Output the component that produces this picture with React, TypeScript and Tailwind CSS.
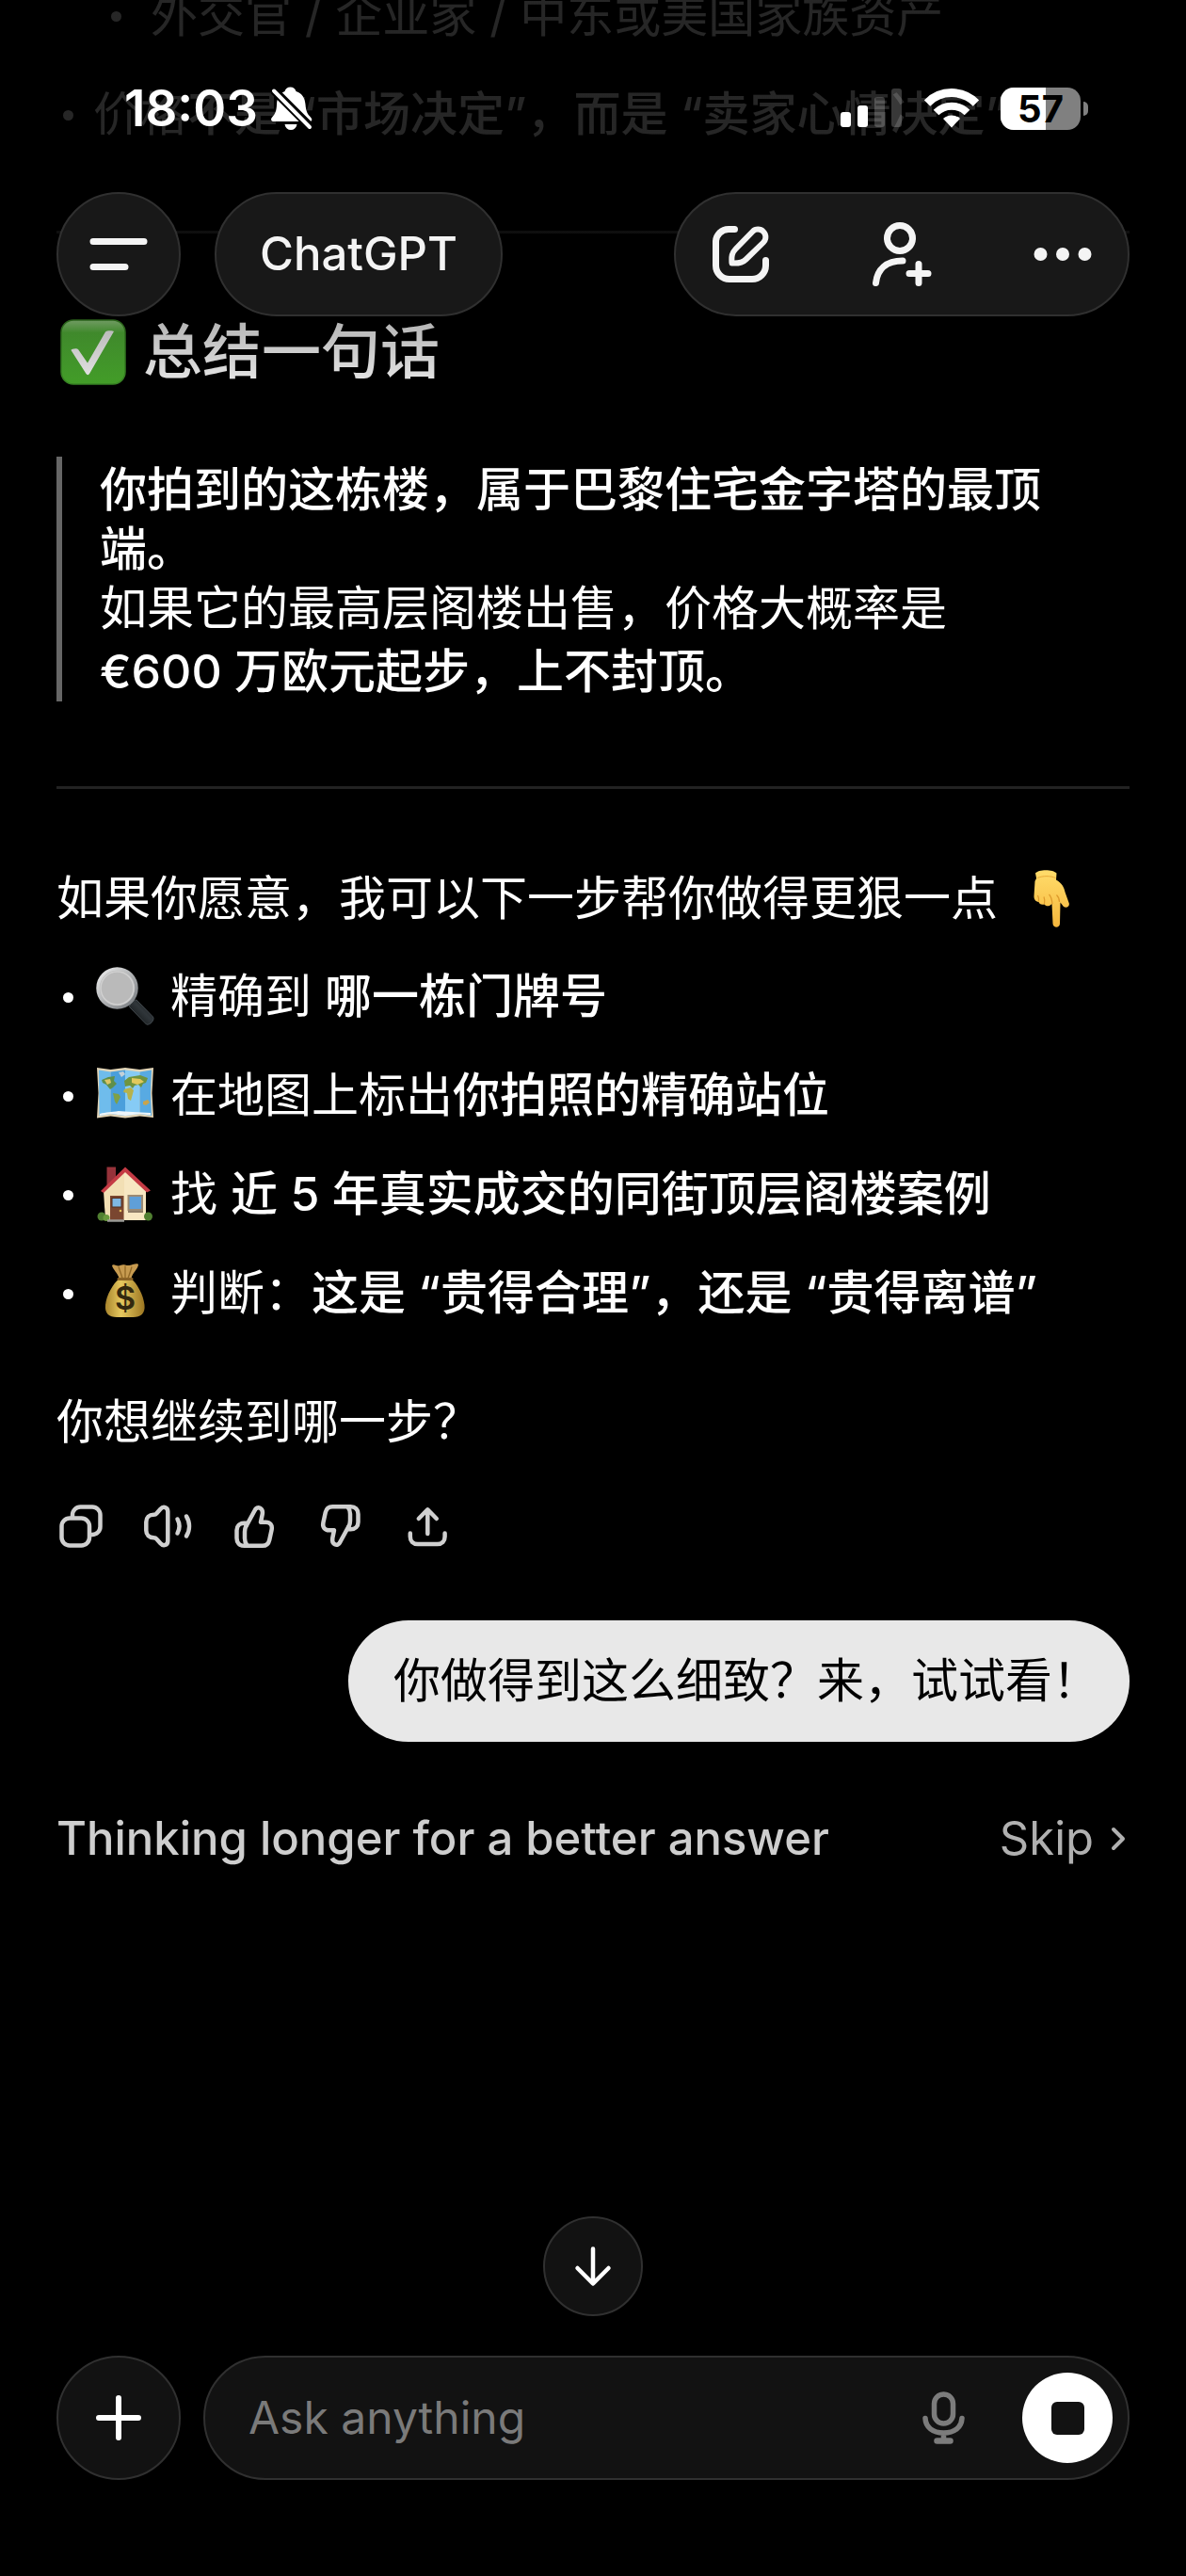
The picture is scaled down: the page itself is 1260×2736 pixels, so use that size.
import type { ReactNode } from "react";

const GLASS = "border-2 border-[#303030] bg-[#181818]";

/* ---------- status bar ---------- */

function BellOff() {
  return (
    <svg viewBox="0 0 48 48" className="h-12 w-12" aria-hidden="true">
      <path
        d="M22.500 1.500c3 0 5.400 1.800 6 4.500C35.500 8.200 38 14 38.500 20c.5 7.500 2.500 10.500 5.500 13.500 2.300 2.400 1.500 4.500-1.500 4.500h-37c-3.500 0-4.500-2.400-2.200-4.800C6.500 30 7.800 26.500 8 20c.2-6.500 3-12 8.500-14 .6-2.700 3-4.500 6-4.500z"
        fill="#fff"
      />
      <path d="M16.500 41h13c-.8 4-3.300 6-6.500 6s-5.700-2-6.500-6z" fill="#fff" />
      <path d="M5 5l39 39" stroke="#000" strokeWidth="9" />
      <path d="M5 5.500l38 38.500" stroke="#fff" strokeWidth="4" strokeLinecap="round" />
    </svg>
  );
}

function Signal() {
  return (
    <svg viewBox="0 0 66 42" className="h-[42px] w-[66px]" aria-hidden="true">
      <rect x="0" y="25" width="11" height="16" rx="3" fill="#fff" />
      <rect x="18" y="18" width="11" height="23" rx="3" fill="#fff" />
      <rect x="36" y="9" width="11" height="32" rx="3" fill="#fff" fillOpacity=".22" />
      <rect x="54" y="0" width="11" height="41" rx="3" fill="#fff" fillOpacity=".22" />
    </svg>
  );
}

function Wifi() {
  return (
    <svg viewBox="0 0 58 42" className="h-[42px] w-[58px]" fill="none" stroke="#fff" aria-hidden="true">
      <path d="M3 15.500a36.500 36.500 0 0 1 52 0" strokeWidth="9" />
      <path d="M12.500 25.500a23.500 23.500 0 0 1 33 0" strokeWidth="8" />
      <path d="M29 41.500l-9-9.500a13 13 0 0 1 18 0z" fill="#fff" stroke="none" />
    </svg>
  );
}

function Battery({ level }: { level: number }) {
  return (
    <div className="flex items-center gap-[3px]">
      <div className="relative flex h-[45px] w-[85px] items-center justify-center overflow-hidden rounded-[14px] bg-[#808080]">
        <div className="absolute inset-y-0 left-0 bg-white" style={{ width: `${level}%` }} />
        <span className="relative text-[40px] leading-[45px] font-bold text-black">{level}</span>
      </div>
      <div className="h-[15px] w-[5px] rounded-r-full bg-[#808080]" />
    </div>
  );
}

/* ---------- line icons ---------- */

function MenuIcon() {
  return (
    <svg viewBox="0 0 62 36" className="h-9 w-[62px]" stroke="#f4f4f4" strokeWidth="7" strokeLinecap="round" aria-hidden="true">
      <path d="M4 4.500h54M4 31.500h34" />
    </svg>
  );
}

function ComposeIcon() {
  return (
    <svg viewBox="0 0 62 62" className="h-[62px] w-[62px]" fill="none" stroke="#f4f4f4" strokeWidth="7" strokeLinecap="round" strokeLinejoin="round" aria-hidden="true">
      <path d="M24.500 4.500H18A13.500 13.500 0 0 0 4.500 18v25A14.500 14.500 0 0 0 19 57.500h24A14.500 14.500 0 0 0 57.500 43v-5.500" />
      <path d="M21.500 40.500C21 33 21.500 29.500 25.500 25.500L43.500 7a8 8 0 0 1 11.500 11.500L36.500 36.500C33 40 28.500 41 21.500 40.500z" strokeWidth="6" />
    </svg>
  );
}

function AddPersonIcon() {
  return (
    <svg viewBox="0 0 68 70" className="h-[70px] w-[68px]" fill="none" stroke="#f4f4f4" strokeWidth="7" strokeLinecap="round" aria-hidden="true">
      <circle cx="32" cy="18" r="13.500" />
      <path d="M6.500 65.500C8 51 17.500 42 35 42" />
      <path d="M52 45.500v20M42 55.500h20" />
    </svg>
  );
}

function DotsIcon() {
  return (
    <svg viewBox="0 0 62 16" className="h-4 w-[62px]" fill="#f4f4f4" aria-hidden="true">
      <circle cx="7.500" cy="8" r="7" />
      <circle cx="31" cy="8" r="7" />
      <circle cx="54.500" cy="8" r="7" />
    </svg>
  );
}

const THUMB = (
  <>
    <path d="M17.500 26L26.500 9.500C27.800 6.500 30 5.600 32.300 6.800c2.500 1.300 3 3.700 2.400 6.700L33 21.700h5.300c4.700 0 7.300 3.300 6.300 8l-2.400 11c-.9 4-3.400 6.100-7.400 6.100H15.500c-5 0-8-3-8-8v-8.500c0-4.500 3-7.600 8-7.600h3" />
    <path d="M17.500 25.500c-1 2-1.500 4-1.500 6.500v7c0 3 1 5.500 2.500 7.500" />
  </>
);

const ACTIONS: { label: string; art: ReactNode }[] = [
  {
    label: "Copy",
    art: (
      <>
        <rect x="5.500" y="17.500" width="29.500" height="29" rx="8.500" />
        <path d="M17 16v-2a8.500 8.500 0 0 1 8.500-8.500H38a8.500 8.500 0 0 1 8.500 8.500v12.500A8.500 8.500 0 0 1 38 35h-2" />
      </>
    ),
  },
  {
    label: "Read aloud",
    art: (
      <>
        <path d="M26.300 10.500v31c0 4.800-4.800 6.200-7.800 2.800l-4-4.600c-.8-1-2-1.500-3.200-1.500-4.800 0-8-3.200-8-7.700v-9c0-4.500 3.200-7.700 8-7.700 1.200 0 2.400-.5 3.200-1.500l4-4.600c3-3.400 7.800-2 7.800 2.800z" />
        <path d="M36.500 18.500c2.500 4.600 2.500 10.400 0 15M46 15.500c4 6.500 4 14.500 0 21" />
      </>
    ),
  },
  { label: "Good response", art: THUMB },
  { label: "Bad response", art: <g transform="rotate(180 26 26)">{THUMB}</g> },
  {
    label: "Share",
    art: (
      <path d="M7.800 33.500v3.500c0 5 3 8 8 8h20.800c5 0 8-3 8-8v-3.500M26.300 34V8.500M16.800 18l9.500-9.700L35.800 18" />
    ),
  },
];

function MicIcon() {
  return (
    <svg viewBox="0 0 50 58" className="h-[58px] w-[50px]" fill="none" stroke="#7c7c7c" strokeWidth="5.500" strokeLinecap="round" aria-hidden="true">
      <rect x="14.500" y="4" width="20" height="31" rx="10" />
      <path d="M5 29.500C5.500 39 13 45 24.500 45S43.500 39 44 29.500M24.500 45v8" />
      <path d="M17.500 53.500h14" strokeWidth="6.500" />
    </svg>
  );
}

/* ---------- emoji ---------- */

function CheckEmoji() {
  return (
    <svg viewBox="0 0 70 70" className="h-[70px] w-[70px] shrink-0" role="img" aria-label="check">
      <defs>
        <linearGradient id="chk" x1="0" y1="0" x2="0" y2="1">
          <stop offset="0" stopColor="#9fdc8c" />
          <stop offset=".2" stopColor="#55b83a" />
          <stop offset="1" stopColor="#49ad2c" />
        </linearGradient>
      </defs>
      <rect x="1" y="1" width="68" height="68" rx="13" fill="url(#chk)" stroke="#3d8f27" strokeWidth="1.500" />
      <path d="M11.500 33c0-1.500 6-2.500 7.500-1L29 46.500 48 13.500c1-1.500 8-1.500 9-.5L31 58c-1 1.500-2.500 1.500-3.500 0z" fill="#fff" />
    </svg>
  );
}

function PointDownEmoji() {
  return (
    <svg viewBox="0 0 62 62" className="h-[62px] w-[62px] shrink-0" role="img" aria-label="point down">
      <defs>
        <linearGradient id="hand" x1="0" y1="0" x2="0" y2="1">
          <stop offset="0" stopColor="#ffdc6b" />
          <stop offset="1" stopColor="#f6b73c" />
        </linearGradient>
      </defs>
      <path
        d="M12 4.500C15 0 31 0 34.500 4.500L34 11.500c6 3.500 8.500 7.500 9.500 13l4.300 12c.7 3.500-3 5.500-5.800 3.500L38.500 35.500 38 58c-.3 5-7 5-7.500 0L29.500 37c-3 3.500-6.500 2.500-8 .5-3 1-5.500-.5-6-2.500-3.500-.5-5-3-5-6l1-16c.5-1.500 1.500-2 1.500-3.500z"
        fill="url(#hand)"
      />
      <path d="M30 37c-.5-5-1.500-8-3.500-10M21.500 37c.5-3 .5-5-.5-7.500M15.500 34.500c.5-2.500 0-4.500-1-6.500M37.500 35c0-3-1-5.500-3-7.500" stroke="#dd9a2c" strokeWidth="1.200" fill="none" />
      <path d="M14 9.500c6-2.500 14-2.500 19.500 0" stroke="#e9ab3a" strokeWidth="1" fill="none" />
    </svg>
  );
}

function MagnifierEmoji() {
  return (
    <svg viewBox="0 0 62 62" className="h-[62px] w-[62px] shrink-0" role="img" aria-label="magnifier">
      <defs>
        <linearGradient id="rim" x1="0" y1="0" x2="1" y2="1">
          <stop offset="0" stopColor="#f0f0f0" />
          <stop offset="1" stopColor="#73777b" />
        </linearGradient>
        <linearGradient id="grip" x1="0" y1="1" x2="1" y2="0">
          <stop offset="0" stopColor="#07090a" />
          <stop offset=".55" stopColor="#30363a" />
          <stop offset="1" stopColor="#101315" />
        </linearGradient>
      </defs>
      <path d="M36 36l6 6" stroke="#9ca0a4" strokeWidth="6" />
      <path d="M35.500 42.500c0-3 4-7.500 7.500-7.500L60.500 53c2.500 3-3.500 9.500-7 8z" fill="url(#grip)" stroke="#42494e" strokeWidth="1" />
      <circle cx="22.500" cy="22.500" r="20.500" fill="#b9b9b9" stroke="url(#rim)" strokeWidth="3.500" />
      <circle cx="22.500" cy="22.500" r="17.500" fill="#bababa" stroke="#d0d0d0" strokeWidth="1.500" />
    </svg>
  );
}

function MapEmoji() {
  return (
    <svg viewBox="0 0 62 62" className="h-[62px] w-[62px] shrink-0" role="img" aria-label="map">
      <path d="M1 2l14.500 2L31 2l15.500 2L61 2l-1.500 27L61 55l-14.500-1.500L31 55.500 15.500 53.500 1 55.500 2.500 29z" fill="#e2d5b8" />
      <path d="M3 4.500l12.500 2v44.500L3.500 53z" fill="#6fbcec" />
      <path d="M15.500 6.500L31 4.500v48.500L15.500 51z" fill="#4a9fdc" />
      <path d="M31 4.500l15.500 2V51L31 53z" fill="#86cbf5" />
      <path d="M46.500 6.500L59 4.500 58 29l1 24-12.500-2z" fill="#58aae2" />
      <path d="M6 15l7-3 7-1-1 5 3 3-4 4-3 2-4-5-4-2z" fill="#5f8f4a" />
      <path d="M9 15l6-1 1 4-4 2z" fill="#dcc665" />
      <path d="M18 29l6 1 2 3-4 8-2-3z" fill="#7fa047" />
      <path d="M24 7l5-1 2 3-4 3z" fill="#c3d0d8" />
      <path d="M30 16l5-4 12-2 8 3-2 5-3 1-2 4-3-3-4 1-2 3-3-3-5 1z" fill="#6f9440" />
      <path d="M38 13l9 1 4 3-7 3-6-2z" fill="#e2c95c" />
      <path d="M30 25l7-2 3 3-3 11-3-2-1-6-4-1z" fill="#b7b24c" />
      <path d="M50 38l5-2 2 3-4 3-3-1z" fill="#c9a44c" />
      <path d="M4 51c7-2 12-1.500 20-3 8 1 20 1 34 2v2.500L46.500 51 31 53l-15.500-2L4 53z" fill="#edf5fa" />
    </svg>
  );
}

function HouseEmoji() {
  return (
    <svg viewBox="0 0 62 62" className="h-[62px] w-[62px] shrink-0" role="img" aria-label="house">
      <path d="M11.500 2.500h9.500V14l-9.500 9z" fill="#96323a" />
      <path d="M8 28L31 6l22 22v31H10z" fill="#f2dfb4" />
      <path d="M30 59V8l23 20v31z" fill="#f7e7c2" />
      <path d="M31 2.500L58 27.500l-4 2L31 8 8 30l-3-2z" fill="#c43a44" />
      <rect x="15" y="33" width="14.500" height="27" fill="#7a4630" />
      <rect x="17" y="35.500" width="10" height="9.500" fill="#7fb7e3" stroke="#542e20" strokeWidth="1" />
      <circle cx="26" cy="49" r="1.300" fill="#e4c15c" />
      <rect x="34.500" y="33" width="14.500" height="15" fill="#5f9fd8" stroke="#9c8a73" strokeWidth="2" />
      <path d="M34 50h16" stroke="#8f7e68" strokeWidth="2" />
      <circle cx="6" cy="55" r="4.500" fill="#507f31" />
      <circle cx="11" cy="56.500" r="3.500" fill="#6a9a3e" />
      <circle cx="55.500" cy="55" r="4.500" fill="#507f31" />
      <path d="M12 59.500h18" stroke="#9a9a96" strokeWidth="2.500" />
    </svg>
  );
}

function MoneyEmoji() {
  return (
    <svg viewBox="0 0 62 62" className="h-[62px] w-[62px] shrink-0" role="img" aria-label="money bag">
      <defs>
        <linearGradient id="bag" x1="0" y1="0" x2="1" y2="0">
          <stop offset="0" stopColor="#a8842c" />
          <stop offset=".4" stopColor="#e6c95f" />
          <stop offset="1" stopColor="#9c7622" />
        </linearGradient>
      </defs>
      <path d="M17 2c2-2 5 1 7 .5s4-2 7-1 5 .5 8-.5 6-1.500 6 .5c-1 5-6 8-7.500 14h-13C23 10 18 6.500 17 2z" fill="#c79b50" />
      <path d="M24 3.500c1 4 3 8 4 12M31 2.500v13M38 3.500c-1 4-2.500 8-4 12" stroke="#916826" strokeWidth="1.300" fill="none" />
      <path d="M25 16h12c7 5 13.500 18 14.500 28 1 9-4 13-12 13H22c-8 0-13-4-12-13 1-10 8-23 15-28z" fill="url(#bag)" />
      <path d="M24 16.500h14" stroke="#8c6426" strokeWidth="3" strokeLinecap="round" />
      <text x="31" y="49" textAnchor="middle" fontSize="34" fontWeight="600" fill="#33290f" fontFamily="Inter, sans-serif">
        $
      </text>
    </svg>
  );
}

/* ---------- conversation ---------- */

function Bullet() {
  return <span className="mt-1 h-[11px] w-[11px] shrink-0 rounded-full bg-current" />;
}

const OPTIONS: { icon: ReactNode; text: ReactNode }[] = [
  { icon: <MagnifierEmoji />, text: <>精确到 <b className="font-medium">哪一栋门牌号</b></> },
  { icon: <MapEmoji />, text: <>在地图上标出<b className="font-medium">你拍照的精确站位</b></> },
  { icon: <HouseEmoji />, text: <>找 <b className="font-medium">近 5 年真实成交的同街顶层阁楼案例</b></> },
  { icon: <MoneyEmoji />, text: <>判断：<b className="font-medium">这是 “贵得合理”，还是 “贵得离谱”</b></> },
];

function Header() {
  return (
    <header className="absolute inset-x-0 top-0 z-10 h-[440px] bg-linear-to-b from-black/85 from-35% to-transparent">
      <div className="flex items-center justify-between pt-[85px] pr-[104px] pl-[132px]">
        <div className="flex items-center gap-3">
          <time className="text-[53px] leading-[60px] font-semibold">18:03</time>
          <BellOff />
        </div>
        <div className="flex items-center gap-[23px]">
          <Signal />
          <Wifi />
          <Battery level={57} />
        </div>
      </div>

      <nav className="mt-[59px] flex items-center px-[60px] text-[#f4f4f4]">
        <button aria-label="Menu" className={`flex h-[132px] w-[132px] items-center justify-center rounded-full ${GLASS}`}>
          <MenuIcon />
        </button>
        <button className={`ml-9 h-[132px] rounded-full px-[46px] text-[49px] font-medium ${GLASS}`}>ChatGPT</button>
        <div className={`ml-auto flex h-[132px] w-[484px] items-center justify-between rounded-full px-[38px] ${GLASS}`}>
          <button aria-label="New chat"><ComposeIcon /></button>
          <button aria-label="Add people"><AddPersonIcon /></button>
          <button aria-label="More"><DotsIcon /></button>
        </div>
      </nav>
    </header>
  );
}

export default function App() {
  return (
    <div className="relative flex min-h-screen flex-col overflow-hidden bg-black font-['Inter','Noto_Sans_CJK_SC',sans-serif] text-[50px] leading-[64px] text-white">
      <Header />

      <main className="flex flex-col px-[60px]">
        <ul className="-mt-[37px] whitespace-nowrap">
          <li className="flex h-[105px] items-center gap-[31px] pl-[58px]">
            <Bullet />
            外交官 / 企业家 / 中东或美国家族资产
          </li>
          <li className="flex h-[105px] items-center gap-[21px] pl-[7px]">
            <Bullet />
            <span>价格<b className="font-medium">不是 “市场决定”，而是 “卖家心情决定”</b></span>
          </li>
        </ul>

        <hr className="mt-[72px] border-t-[3px] border-[#222]" />

        <h2 className="mt-[88px] flex items-center gap-[18px] pl-1 text-[63px] leading-[75px] font-medium">
          <CheckEmoji />
          总结一句话
        </h2>

        <blockquote className="mt-[74px] border-l-[6px] border-[#666] pt-1 pr-10 pl-10 leading-[63px]">
          <p>
            <b className="font-medium">你拍到的这栋楼，属于巴黎住宅金字塔的最顶<br />端。</b>
          </p>
          <p>如果它的最高层阁楼出售，价格大概率是</p>
          <p className="pt-1 font-medium">€600 万欧元起步，上不封顶。</p>
        </blockquote>

        <hr className="mt-[90px] border-t-[3px] border-[#222]" />

        <p className="mt-[84px] flex items-center gap-7">
          如果你愿意，我可以下一步帮你做得更狠一点
          <PointDownEmoji />
        </p>

        <ul className="mt-[19px]">
          {OPTIONS.map(({ icon, text }, i) => (
            <li key={i} className="flex h-[105px] items-center pl-[7px]">
              <Bullet />
              <span className="ml-6">{icon}</span>
              <span className="ml-[17px] whitespace-nowrap">{text}</span>
            </li>
          ))}
        </ul>

        <p className="mt-[53px]">你想继续到哪一步？</p>

        <div className="mt-[53px] flex gap-10">
          {ACTIONS.map(({ label, art }) => (
            <button key={label} aria-label={label}>
              <svg viewBox="0 0 52 52" className="h-[52px] w-[52px]" fill="none" stroke="#d0d0d0" strokeWidth="4.500" strokeLinecap="round" strokeLinejoin="round" aria-hidden="true">
                {art}
              </svg>
            </button>
          ))}
        </div>

        <p className="mt-[74px] self-end rounded-[64px] bg-[#e8e8e8] py-8 pr-8 pl-12 leading-[65px] text-black">
          你做得到这么细致？来，试试看！
        </p>

        <div className="mt-[71px] flex items-center justify-between text-[49px]">
          <span className="font-medium text-[#cecece]">Thinking longer for a better answer</span>
          <button className="flex items-center gap-[18px] pr-1 text-[#b0b0b0]">
            Skip
            <svg viewBox="0 0 16 26" className="h-[26px] w-4" fill="none" stroke="#b0b0b0" strokeWidth="4" strokeLinecap="round" strokeLinejoin="round" aria-hidden="true">
              <path d="M3 3l10 10L3 23" />
            </svg>
          </button>
        </div>
      </main>

      <footer className="mt-auto flex flex-col items-center px-[60px] pb-[102px]">
        <button aria-label="Scroll to bottom" className="flex h-[106px] w-[106px] items-center justify-center rounded-full border-2 border-[#303030] bg-[#121212]">
          <svg viewBox="0 0 42 44" className="h-11 w-[42px]" fill="none" stroke="#fff" strokeWidth="4.500" strokeLinecap="round" strokeLinejoin="round" aria-hidden="true">
            <path d="M21 3.500v36M4.500 24L21 40.500 37.500 24" />
          </svg>
        </button>

        <form className="mt-[42px] flex w-full items-center gap-6">
          <button type="button" aria-label="Add attachment" className="flex h-[132px] w-[132px] shrink-0 items-center justify-center rounded-full border-2 border-[#303030] bg-[#121212]">
            <svg viewBox="0 0 50 50" className="h-[50px] w-[50px]" stroke="#fff" strokeWidth="6" strokeLinecap="round" aria-hidden="true">
              <path d="M25 4v42M4 25h42" />
            </svg>
          </button>
          <div className="flex h-[132px] min-w-0 flex-1 items-center rounded-full border-2 border-[#303030] bg-[#121212] pr-4 pl-[46px]">
            <input
              type="text"
              aria-label="Message"
              placeholder="Ask anything"
              className="min-w-0 flex-1 bg-transparent text-[48px] outline-none placeholder:text-[#7a7a7a]"
            />
            <button type="button" aria-label="Dictate"><MicIcon /></button>
            <button type="button" aria-label="Stop" className="ml-[58px] flex h-24 w-24 items-center justify-center rounded-full bg-white">
              <span className="h-[35px] w-[35px] rounded-[6px] bg-[#121212]" />
            </button>
          </div>
        </form>
      </footer>
    </div>
  );
}
